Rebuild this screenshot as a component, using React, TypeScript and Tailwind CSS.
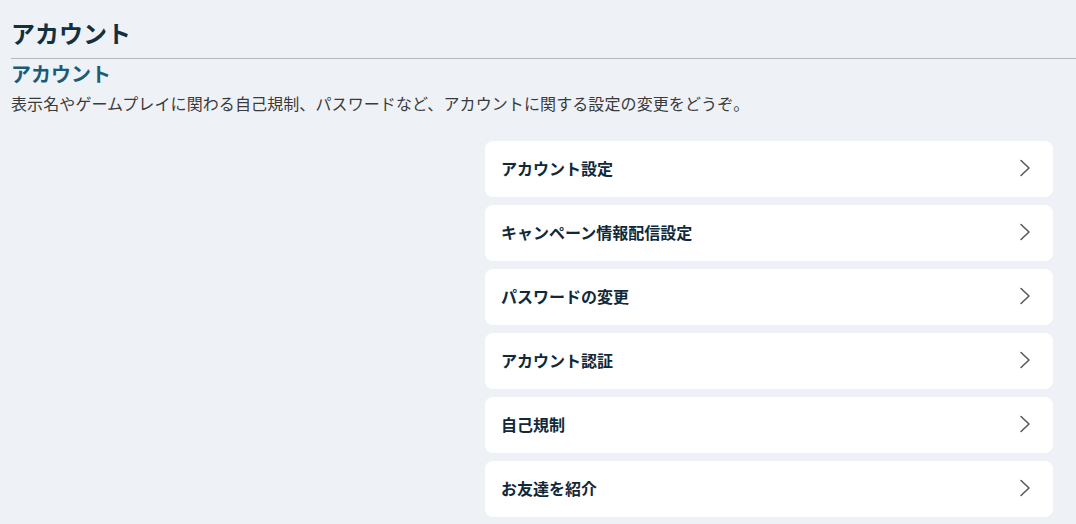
const items = [
  "アカウント設定",
  "キャンペーン情報配信設定",
  "パスワードの変更",
  "アカウント認証",
  "自己規制",
  "お友達を紹介",
];

function Chevron() {
  return (
    <svg width="12" height="18" viewBox="0 0 12 18" fill="none" className="text-[#555b60]">
      <path d="M2 1.5 L10 9 L2 16.5" stroke="currentColor" strokeWidth="1.6" strokeLinecap="round" strokeLinejoin="round" />
    </svg>
  );
}

export default function App() {
  return (
    <div
      className="min-h-[524px] bg-[#eef2f6] text-[#333]"
      style={{ fontFamily: '"Noto Sans CJK JP", "Liberation Sans", sans-serif' }}
    >
      <div className="pl-[11px] pt-[16px]">
        <h1 className="text-[24px] font-bold leading-[34px] text-[#13303f]">アカウント</h1>
        <div className="mt-[8px] h-px bg-[#b3b8bd]" />
        <h2 className="mt-px text-[20px] font-bold leading-[28px] text-[#1b5b77]">アカウント</h2>
        <p className="mt-[3px] text-[16px] leading-[24px] text-[#3a3a3a] tracking-[0.1px]">
          表示名やゲームプレイに関わる自己規制、パスワードなど、アカウントに関する設定の変更をどうぞ。
        </p>
      </div>
      <div className="flex justify-end pr-[23px] pt-[26px]">
        <ul className="flex w-[568px] flex-col gap-2">
          {items.map((label) => (
            <li
              key={label}
              className="flex h-[56px] items-center justify-between rounded-lg bg-white pb-[3px] pl-[16px] pr-[22px]"
            >
              <span className="text-[16px] font-bold text-[#10293a]">{label}</span>
              <Chevron />
            </li>
          ))}
        </ul>
      </div>
    </div>
  );
}
